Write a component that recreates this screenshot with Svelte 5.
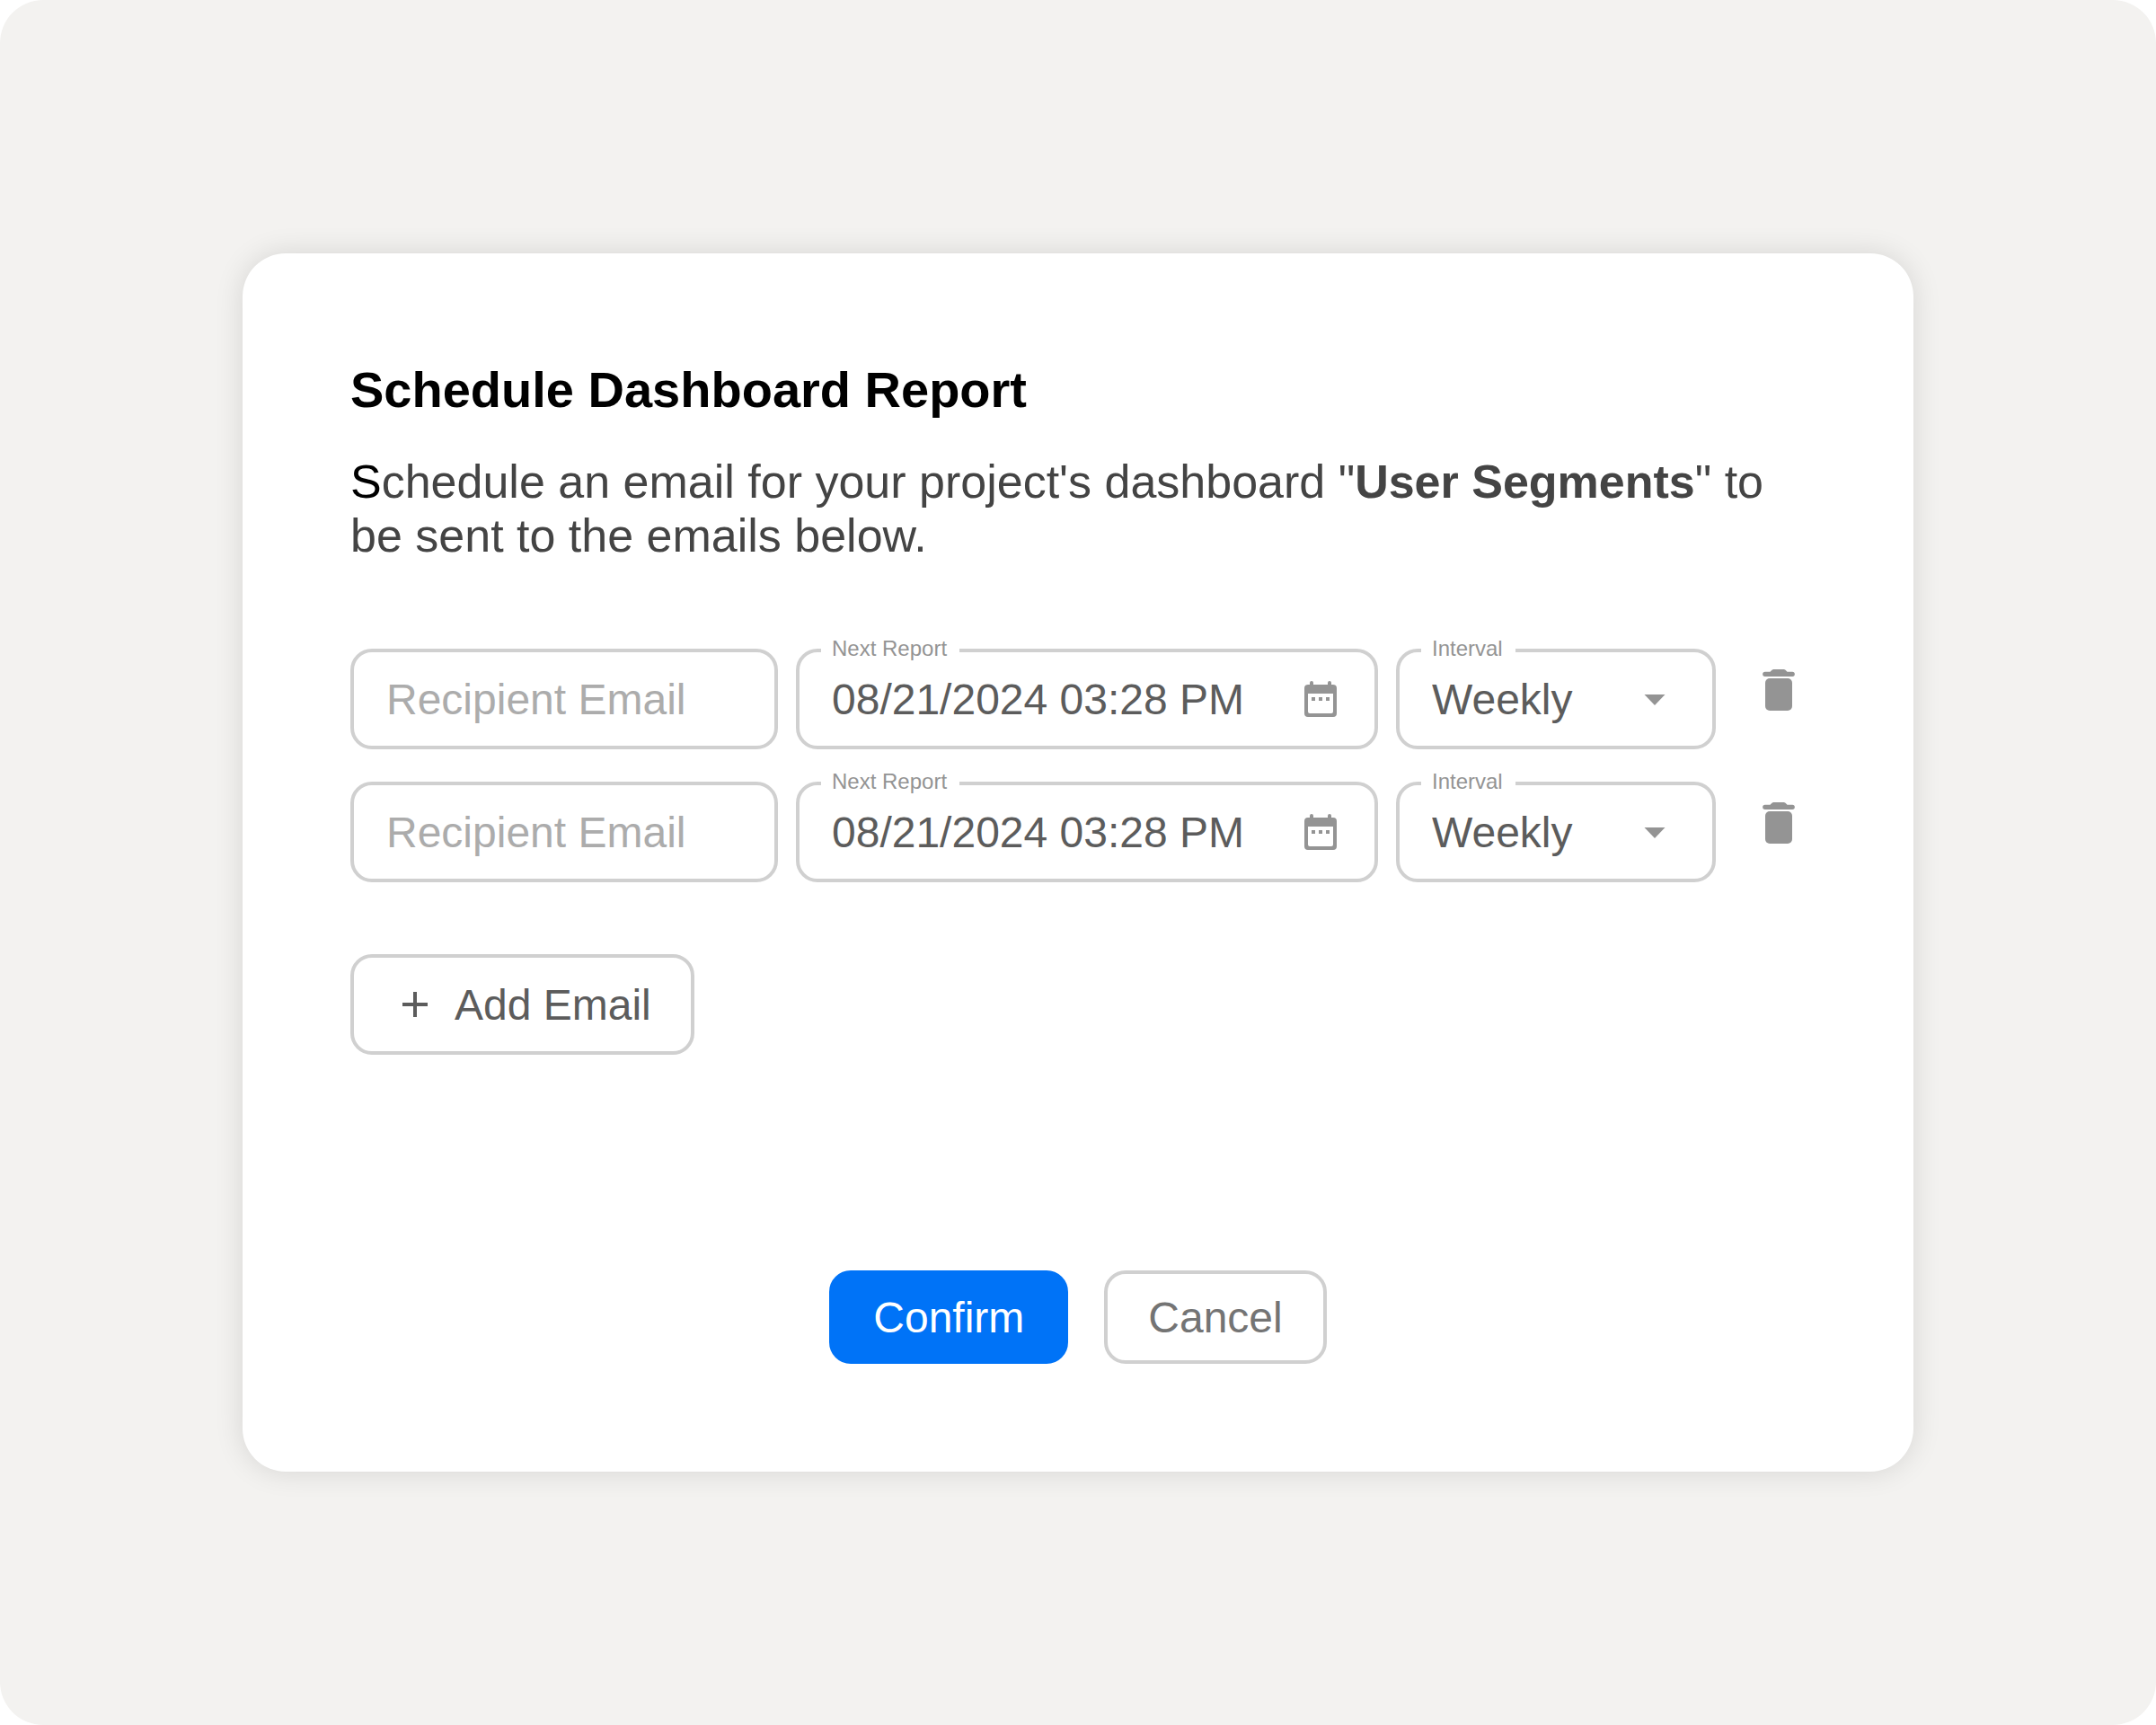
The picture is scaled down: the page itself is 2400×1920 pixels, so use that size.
<script>
  const intervals = ["Daily", "Weekly", "Monthly"];

  let nextId = 3;
  let dashboard = "User Segments";
  let reports = [newReport(1), newReport(2)];

  function newReport(id) {
    return { id, email: "", date: "08/21/2024 03:28 PM", interval: "Weekly" };
  }

  function addReport() {
    reports = [...reports, newReport(nextId++)];
  }

  function removeReport(id) {
    reports = reports.filter((r) => r.id !== id);
  }
</script>

<main>
  <form class="card" on:submit|preventDefault>
    <h1>Schedule Dashboard Report</h1>
    <p class="description">
      Schedule an email for your project's dashboard "<strong>{dashboard}</strong
      >" to be sent to the emails below.
    </p>

    <div class="reports">
      {#each reports as report (report.id)}
        <div class="report">
          <div class="field">
            <input
              type="email"
              placeholder="Recipient Email"
              aria-label="Recipient Email"
              bind:value={report.email}
            />
          </div>
          <div class="field">
            <label for="date-{report.id}">Next Report</label>
            <input
              id="date-{report.id}"
              type="text"
              bind:value={report.date}
            />
            <button type="button" class="icon" aria-label="Choose date">
              <svg width="48" height="48" viewBox="0 0 48 48">
                <path
                  fill-rule="evenodd"
                  d="M12 8V6a2 2 0 0 1 4 0v2h16V6a2 2 0 0 1 4 0v2h2a4 4 0 0 1 4 4v28a4 4 0 0 1-4 4H10a4 4 0 0 1-4-4V12a4 4 0 0 1 4-4zM10 18v20a2 2 0 0 0 2 2h24a2 2 0 0 0 2-2V18z"
                />
                <path d="M14 22h4v4h-4zM22 22h4v4h-4zM30 22h4v4h-4z" />
              </svg>
            </button>
          </div>
          <div class="field">
            <label for="interval-{report.id}">Interval</label>
            <select id="interval-{report.id}" bind:value={report.interval}>
              {#each intervals as interval}
                <option>{interval}</option>
              {/each}
            </select>
            <svg class="arrow" width="48" height="48" viewBox="0 0 48 48">
              <path d="M12.5 19h23L24 31z" />
            </svg>
          </div>
          <button
            type="button"
            class="icon delete"
            aria-label="Remove recipient"
            on:click={() => removeReport(report.id)}
          >
            <svg width="60" height="60" viewBox="0 0 60 60">
              <path
                d="M14.8 9.7H20.5L22.5 7.7Q23.3 7 24.5 7H35.5Q36.7 7 37.5 7.7L39.5 9.7H45.2a2.6 2.6 0 0 1 0 5.3H14.8a2.6 2.6 0 0 1 0-5.3z"
              />
              <rect x="15" y="17" width="30" height="36" rx="5" />
            </svg>
          </button>
        </div>
      {/each}
    </div>

    <button type="button" class="button add" on:click={addReport}>
      <svg width="48" height="48" viewBox="0 0 48 48">
        <path d="M22 10h4v12h12v4H26v12h-4V26H10v-4h12z" />
      </svg>
      Add Email
    </button>

    <div class="actions">
      <button type="submit" class="button confirm">Confirm</button>
      <button type="button" class="button cancel">Cancel</button>
    </div>
  </form>
</main>

<style>
  :global(body) {
    background: #fff;
  }
  * {
    box-sizing: border-box;
  }
  main {
    display: flex;
    align-items: center;
    justify-content: center;
    min-height: 100vh;
    border-radius: 48px;
    background: #f3f2f0;
    font-family: "Liberation Sans", Arial, Helvetica, sans-serif;
  }
  .card {
    display: flex;
    flex-direction: column;
    width: 77.5%;
    padding: 120px;
    border-radius: 48px;
    background: #fff;
    box-shadow: 0 0 32px rgba(0, 0, 0, 0.12);
  }
  h1 {
    margin: 0 0 40px;
    color: #000;
    font-size: 56px;
    line-height: 64px;
  }
  .description {
    margin: 0 0 96px;
    color: #444;
    font-size: 52px;
    line-height: 60px;
  }
  .description::first-letter {
    color: #000;
  }
  input,
  select,
  button {
    margin: 0;
    padding: 0;
    border: none;
    outline: none;
    background: transparent;
    color: #5c5c5c;
    font-family: inherit;
    font-size: 48px;
  }
  button {
    cursor: pointer;
  }
  svg {
    display: block;
    flex: none;
    fill: currentColor;
  }
  .reports {
    display: flex;
    flex-direction: column;
    gap: 36px;
    margin-bottom: 80px;
  }
  .report {
    display: grid;
    grid-template-columns: 476fr 648fr 356fr 80px;
    gap: 20px;
  }
  .field {
    position: relative;
    display: flex;
    align-items: center;
    min-width: 0;
    height: 112px;
    padding: 0 36px;
    border: 4px solid #d0d0d0;
    border-radius: 24px;
  }
  .field input,
  .field select {
    flex: 1;
    min-width: 0;
    height: 100%;
    appearance: none;
  }
  .field input::placeholder {
    color: #acacac;
    opacity: 1;
  }
  /* sits over the border and cuts a notch in it */
  .field label {
    position: absolute;
    top: -16px;
    left: 24px;
    padding: 0 14px 0 12px;
    background: #fff;
    color: #949494;
    font-size: 24px;
    line-height: 24px;
  }
  .icon,
  .arrow {
    color: #949494;
  }
  .arrow {
    position: absolute;
    right: 40px;
    pointer-events: none;
  }
  .delete {
    display: flex;
    align-items: center;
    justify-content: flex-end;
    height: 92px;
  }
  .button {
    height: 104px;
    padding: 0 45px;
    border: 4px solid #d0d0d0;
    border-radius: 24px;
  }
  .add {
    display: flex;
    align-items: center;
    align-self: flex-start;
    gap: 20px;
    height: 112px;
    padding: 0 44px;
  }
  .actions {
    display: flex;
    justify-content: center;
    gap: 40px;
    margin-top: 240px;
  }
  .confirm {
    border-color: #0073f7;
    background: #0073f7;
    color: #fff;
  }
  .cancel {
    color: #747474;
  }
</style>
